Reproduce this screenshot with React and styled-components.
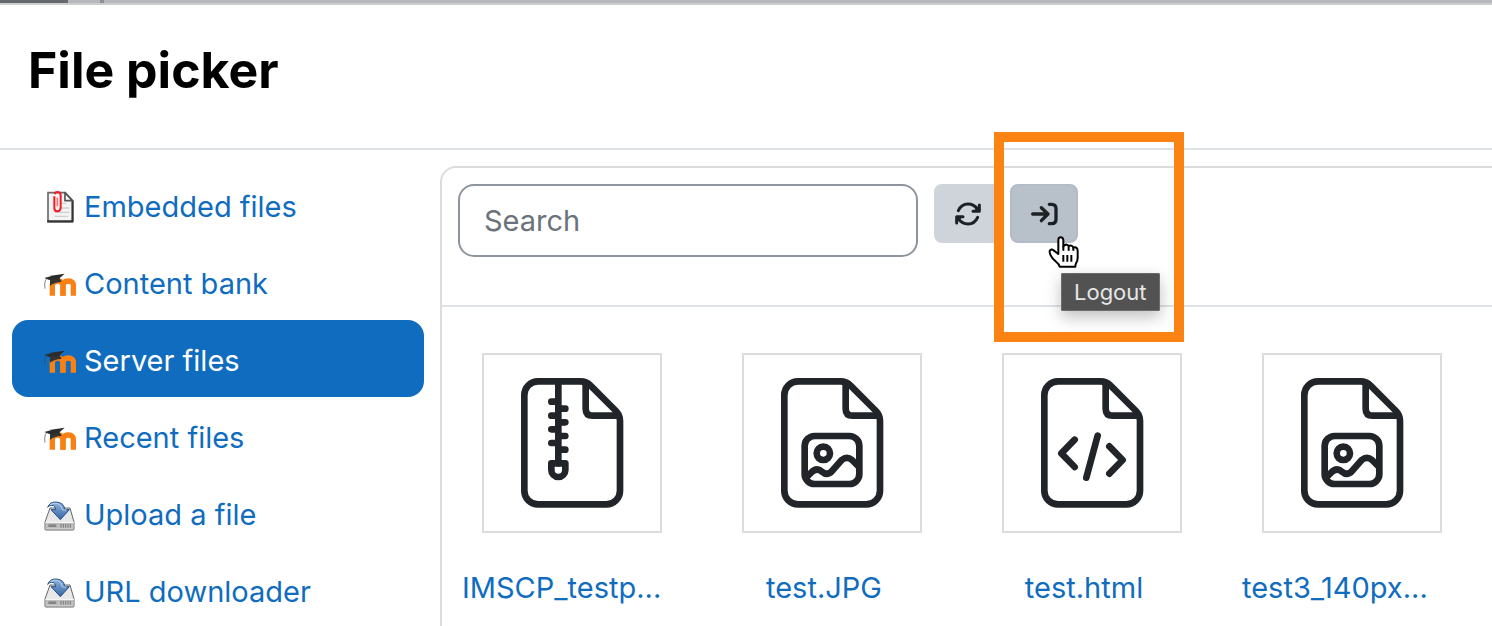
import React from 'react';
import styled, { createGlobalStyle } from 'styled-components';

const GlobalStyle = createGlobalStyle`
    * {
        box-sizing: border-box;
    }
    body {
        margin: 0;
        background-color: #fff;
        font-family: Inter, "Liberation Sans", sans-serif;
        font-size: 29px;
        line-height: 45px;
        overflow: hidden;
    }
`
const Picker = styled.div`
    display: flex;
    flex-direction: column;
    min-height: 100vh;
`
const PageEdge = styled.div`
    display: flex;
    gap: 32px;
    height: 5px;
    background-color: #b5b7ba;
    border-bottom: 2px solid #cccdce;
    &::before {
        content: "";
        width: 68px;
        background-color: #65696b;
    }
    &::after {
        content: "";
        width: 4px;
        background-color: #8d9093;
    }
`
const Header = styled.header`
    padding: 33px 28px 45px;
    border-bottom: 2px solid #dee2e6;
    h1 {
        margin: 0;
        font-size: 50px;
        line-height: 65px;
        font-weight: 700;
        color: #000;
    }
`
const Body = styled.div`
    display: flex;
    flex: 1;
    gap: 16px;
    padding: 16px 0 0 12px;
`
const Repositories = styled.nav`
    display: flex;
    flex-direction: column;
    flex: none;
    width: 412px;
`
const Repository = styled.a`
    display: flex;
    align-items: center;
    gap: 8px;
    padding: 18px 32px 14px;
    border-radius: 16px;
    text-decoration: none;
    white-space: nowrap;
    color: ${props => props.$active ? '#fff' : '#0f6cbf'};
    background-color: ${props => props.$active ? '#0f6cbf' : 'transparent'};
    svg {
        flex: none;
        width: 32px;
        height: 32px;
    }
`
const Panel = styled.main`
    flex: 1;
    min-width: 0;
    border: solid #dcdcdc;
    border-width: 2px 0 0 2px;
    border-top-left-radius: 16px;
`
const Toolbar = styled.div`
    display: flex;
    align-items: flex-start;
    gap: 8px;
    padding: 16px 16px 48px;
    border-bottom: 2px solid #dee2e6;
`
const SearchBox = styled.input`
    width: 460px;
    height: 73px;
    margin-right: 8px;
    padding: 0 24px;
    border: 2px solid #8f959e;
    border-radius: 16px;
    background-color: #fff;
    font: inherit;
    color: #1d2125;
    &::placeholder {
        color: #6a737b;
        opacity: 1;
    }
`
const ToolButton = styled.button`
    display: flex;
    align-items: center;
    justify-content: center;
    width: 68px;
    height: 59px;
    padding: 0;
    border: 2px solid ${props => props.$hovered ? '#b1bcc7' : '#ced4da'};
    border-radius: 8px;
    background-color: ${props => props.$hovered ? '#b8c0ca' : '#ced4da'};
    color: #1d2125;
    cursor: pointer;
    svg {
        width: 30px;
        height: 30px;
    }
`
const LogoutSpot = styled.div`
    position: relative;
`
const Highlight = styled.div`
    position: absolute;
    z-index: 1;
    top: -52px;
    left: -16px;
    width: 190px;
    height: 210px;
    border: 10px solid #fb8314;
    pointer-events: none;
`
const Tooltip = styled.span`
    position: absolute;
    z-index: 2;
    top: 89px;
    left: 51px;
    padding: 4px 12px;
    border: 1px solid #6c6c6c;
    border-radius: 1px;
    background-color: #525252;
    box-shadow: 0 6px 16px rgba(0, 0, 0, 0.25);
    font-size: 22px;
    line-height: 28px;
    color: #e6e6e6;
`
const Pointer = styled.svg`
    position: absolute;
    z-index: 3;
    top: 52px;
    left: 38px;
    width: 33px;
    height: 34px;
`
const Files = styled.div`
    display: flex;
    gap: 56px;
    padding: 46px 20px 16px;
`
const FileLink = styled.a`
    display: flex;
    flex-direction: column;
    gap: 32px;
    flex: none;
    width: 204px;
    text-align: ${props => props.$cut ? 'left' : 'center'};
    text-decoration: none;
    white-space: nowrap;
    color: #0f6cbf;
`
const Thumb = styled.span`
    display: block;
    width: 180px;
    height: 180px;
    margin-left: 20px;
    border: 2px solid #dcdcdc;
    svg {
        display: block;
        width: 176px;
        height: 176px;
    }
`

const EmbeddedIcon = () => (
    <svg viewBox="0 0 96 96" aria-hidden="true">
        <path d="M12 5h51l22 23v65H12z" fill="#f4f4f4" stroke="#6b6b6b" strokeWidth="5" />
        <path d="M10 91h78M86 28v64" stroke="#333" strokeWidth="6" />
        <path d="M63 5v24h22z" fill="#fff" stroke="#555" strokeWidth="5" strokeLinejoin="round" />
        <path d="M50 37h16M52 51h24M32 64h44M32 76h40" stroke="#cfcfcf" strokeWidth="4" />
        <path d="M31 16v35q0 10 9 10t10-10V14q0-11-10-11-7 0-7 7M50 28v20" fill="none" stroke="#f31b24" strokeWidth="6" />
        <path d="M40 20v26" stroke="#f57377" strokeWidth="5" />
    </svg>
);

const MoodleIcon = () => (
    <svg viewBox="0 -16 96 96" aria-hidden="true">
        <g fill="none" stroke="#f98012" strokeWidth="16">
            <path d="M25 67V35q2-12 16-12 16 0 16 16v28" />
            <path d="M57 67V39q0-16 16-16t15 16v28" />
        </g>
        <path d="M18 18l28-5 7 13q-18-1-35 11z" fill="#333" />
        <path d="M1 14Q30 4 62 1L44 17l-28 3z" fill="#2b2b2b" />
        <path d="M9 15Q2 20 2 34l1 12" fill="none" stroke="#444" strokeWidth="2" />
    </svg>
);

const UploadIcon = ({ id }) => (
    <svg viewBox="0 0 96 96" aria-hidden="true">
        <defs>
            <linearGradient id={id} x1="0" y1="0" x2="0" y2="1">
                <stop offset="0" stopColor="#8fb4df" />
                <stop offset="1" stopColor="#3465a4" />
            </linearGradient>
        </defs>
        <path d="M18 27h60l12 42v21q0 3-3 3H6q-3 0-3-3V69z" fill="#e8e8e8" stroke="#666" strokeWidth="3" strokeLinejoin="round" />
        <path d="M5 71h84v18H5z" fill="#bdbdbd" />
        <path d="M4 70h86" stroke="#fafafa" strokeWidth="3" />
        <path d="M13 80h24" stroke="#858585" strokeWidth="8" />
        <path d="M51 75v11M58 75v11M65 75v11M72 75v11M79 75v11" stroke="#777" strokeWidth="3" />
        <path
            d="M11 25Q18 8 37 9q24 2 25 23h14L49 62 21 32h14q-1-13-12-13-7 0-12 6z"
            fill={`url(#${id})`}
            stroke="#274f86"
            strokeWidth="3"
            strokeLinejoin="round"
        />
        <path d="M18 17Q46 3 56 33h11" fill="none" stroke="#b9d2ee" strokeWidth="3" />
    </svg>
);

const RefreshIcon = () => (
    <svg viewBox="-45 -45 90 90" aria-hidden="true">
        <g fill="none" stroke="currentColor" strokeWidth="9" strokeLinecap="round" strokeLinejoin="round">
            <path d="M-29-10Q-20-30 0-30 18-30 29-14M34-27v19H15" />
            <path d="M29 10Q20 30 0 30-18 30-29 14M-34 27V8h19" />
        </g>
        <path d="M34-26v18H16zM-34 26V8h18z" fill="currentColor" />
    </svg>
);

const LogoutIcon = () => (
    <svg viewBox="0 0 90 90" aria-hidden="true">
        <path
            d="M11 45h44M37 26l20 19-20 20M61 16h7q13 0 13 13v32q0 13-13 13h-7"
            fill="none"
            stroke="currentColor"
            strokeWidth="10"
            strokeLinecap="round"
            strokeLinejoin="round"
        />
    </svg>
);

const fileDrawings = {
    zip: (
        <>
            <path d="M223 79v246M202 140h21M202 182h21M202 223h21M202 264h21" />
            <path d="M223 161h21M223 202h21M223 243h21M223 284h21" />
            <path d="M202 325h42v20a21 21 0 0 1-42 0z" />
        </>
    ),
    image: (
        <>
            <rect x="182" y="243" width="164" height="144" rx="30" />
            <circle cx="238" cy="295" r="20" />
            <path d="M187 367l15-15q16-16 32-2t30-2l29-33q16-13 31 0l18 18" />
        </>
    ),
    code: <path d="M212 254l-40 41 40 41M281 242l-34 126M316 274l40 41-40 41" />,
};

const FileIcon = ({ type }) => (
    <svg viewBox="0 0 528 528" aria-hidden="true">
        <g fill="none" stroke="#212529" strokeWidth="20" strokeLinecap="round" strokeLinejoin="round">
            <path d="M162 79h128q17 0 29 12l77 77q12 12 12 29v210a41 41 0 0 1-41 41H162a41 41 0 0 1-41-41V120a41 41 0 0 1 41-41z" />
            <path d="M305 84v77q0 21 21 21h77" />
            {fileDrawings[type]}
        </g>
    </svg>
);

const repositories = [
    { name: 'Embedded files', icon: <EmbeddedIcon /> },
    { name: 'Content bank', icon: <MoodleIcon /> },
    { name: 'Server files', icon: <MoodleIcon />, active: true },
    { name: 'Recent files', icon: <MoodleIcon /> },
    { name: 'Upload a file', icon: <UploadIcon id="upload-arrow" /> },
    { name: 'URL downloader', icon: <UploadIcon id="url-arrow" /> },
];

const files = [
    { name: 'IMSCP_testp...', type: 'zip', cut: true },
    { name: 'test.JPG', type: 'image' },
    { name: 'test.html', type: 'code' },
    { name: 'test3_140px...', type: 'image', cut: true },
];

const App = () => {
    return (
        <Picker>
            <GlobalStyle />
            <PageEdge />
            <Header>
                <h1>File picker</h1>
            </Header>
            <Body>
                <Repositories>
                    {repositories.map(({ name, icon, active }) => (
                        <Repository key={name} href="#" $active={active}>
                            {icon}
                            {name}
                        </Repository>
                    ))}
                </Repositories>
                <Panel>
                    <Toolbar>
                        <SearchBox type="text" placeholder="Search" aria-label="Search" />
                        <ToolButton type="button" aria-label="Refresh">
                            <RefreshIcon />
                        </ToolButton>
                        <LogoutSpot>
                            <ToolButton type="button" aria-labelledby="logout-tip" $hovered>
                                <LogoutIcon />
                            </ToolButton>
                            <Highlight />
                            <Tooltip id="logout-tip" role="tooltip">Logout</Tooltip>
                            <Pointer viewBox="0 0 99 102" aria-hidden="true">
                                <path
                                    d="M31 54V12q0-8 7-8t8 8v20q3-7 10-6 5 1 6 5 5-4 10-1 3 2 4 5 6-3 10 1 3 3 3 9v20q0 10-5 17-2 4-2 10H35q-2-8-10-14Q12 67 8 58 3 47 6 43q5-5 12 1z"
                                    fill="#fff"
                                    stroke="#000"
                                    strokeWidth="6"
                                    strokeLinejoin="round"
                                />
                                <path d="M46 30v14M62 32v12M76 35v9M46 57v20M58 57v20M70 57v20" stroke="#000" strokeWidth="6" />
                            </Pointer>
                        </LogoutSpot>
                    </Toolbar>
                    <Files>
                        {files.map(({ name, type, cut }) => (
                            <FileLink key={name} href="#" $cut={cut}>
                                <Thumb>
                                    <FileIcon type={type} />
                                </Thumb>
                                {name}
                            </FileLink>
                        ))}
                    </Files>
                </Panel>
            </Body>
        </Picker>
    );
}

export default App;
